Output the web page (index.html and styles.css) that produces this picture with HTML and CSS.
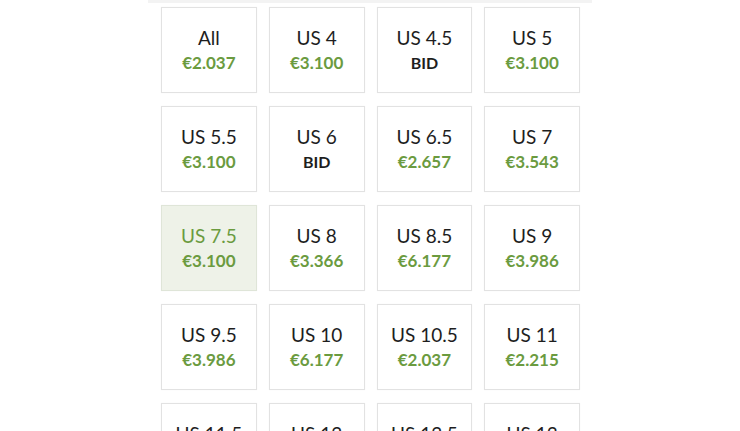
FILE: index.html
```html
<!DOCTYPE html>
<html lang="en">
  <head>
    <meta charset="UTF-8" />
    <meta name="viewport" content="width=device-width, initial-scale=1.0" />
    <title>Select size</title>
    <link rel="stylesheet" href="styles.css">
  </head>
  <body>
    <div class="sizes">
      <div class="sizes-top"></div>

      <!-- Size grid -->
      <div class="size-grid">
        <div class="size"><span class="size-name">All</span><span class="size-price">€2.037</span></div>
        <div class="size"><span class="size-name">US 4</span><span class="size-price">€3.100</span></div>
        <div class="size"><span class="size-name">US 4.5</span><span class="size-price bid">BID</span></div>
        <div class="size"><span class="size-name">US 5</span><span class="size-price">€3.100</span></div>

        <div class="size"><span class="size-name">US 5.5</span><span class="size-price">€3.100</span></div>
        <div class="size"><span class="size-name">US 6</span><span class="size-price bid">BID</span></div>
        <div class="size"><span class="size-name">US 6.5</span><span class="size-price">€2.657</span></div>
        <div class="size"><span class="size-name">US 7</span><span class="size-price">€3.543</span></div>

        <div class="size selected"><span class="size-name">US 7.5</span><span class="size-price">€3.100</span></div>
        <div class="size"><span class="size-name">US 8</span><span class="size-price">€3.366</span></div>
        <div class="size"><span class="size-name">US 8.5</span><span class="size-price">€6.177</span></div>
        <div class="size"><span class="size-name">US 9</span><span class="size-price">€3.986</span></div>

        <div class="size"><span class="size-name">US 9.5</span><span class="size-price">€3.986</span></div>
        <div class="size"><span class="size-name">US 10</span><span class="size-price">€6.177</span></div>
        <div class="size"><span class="size-name">US 10.5</span><span class="size-price">€2.037</span></div>
        <div class="size"><span class="size-name">US 11</span><span class="size-price">€2.215</span></div>

        <div class="size"><span class="size-name">US 11.5</span><span class="size-price">€2.215</span></div>
        <div class="size"><span class="size-name">US 12</span><span class="size-price">€3.100</span></div>
        <div class="size"><span class="size-name">US 12.5</span><span class="size-price">€3.986</span></div>
        <div class="size"><span class="size-name">US 13</span><span class="size-price">€3.543</span></div>
      </div>
    </div>
  </body>
</html>
```

FILE: styles.css
```css
body {
  font-family: Lato, "Open Sans", Arial, sans-serif;
  background: #ffffff;
  margin: 0;
  color: #1e1e1e;
}
.sizes {
  width: 444px;
  margin: 0 auto;
}
.sizes-top {
  height: 3px;
  background: #f3f3f3;
}
.size-grid {
  display: grid;
  grid-template-columns: repeat(4, 1fr);
  column-gap: 12px;
  row-gap: 13px;
  padding: 4px 12px 0 13px;
}
.size {
  height: 86px;
  box-sizing: border-box;
  border: 1px solid #e2e2e2;
  box-shadow: 0 0 1px rgba(0, 0, 0, 0.06);
  display: flex;
  flex-direction: column;
  align-items: center;
  justify-content: center;
}
.size-name {
  font-size: 19px;
  line-height: 24px;
  margin-bottom: 2px;
}
.size-price {
  font-size: 17px;
  line-height: 22px;
  font-weight: bold;
  color: #6b9b3f;
}
.bid {
  color: #1e1e1e;
  font-size: 16px;
}
.selected {
  background: #eef2e8;
  border-color: #dfe5d8;
}
.selected .size-name {
  color: #6b9b3f;
}
```
